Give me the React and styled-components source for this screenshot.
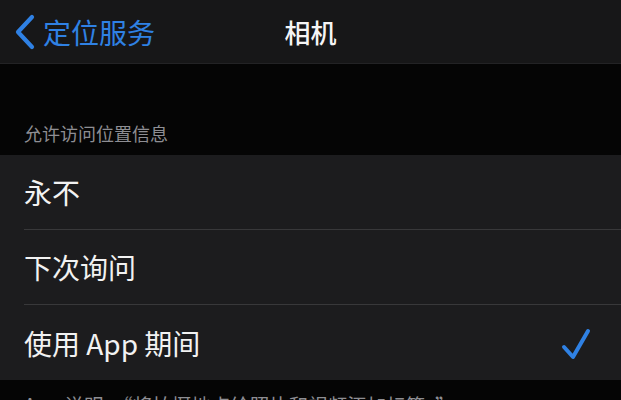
import React from 'react';
import styled, { createGlobalStyle } from 'styled-components';

const GlobalStyle = createGlobalStyle`
  html, body {
    margin: 0;
    padding: 0;
    background: #050505;
  }
  body {
    font-family: "Noto Sans CJK SC", "Noto Sans", sans-serif;
    -webkit-font-smoothing: antialiased;
  }
`;

const Screen = styled.div`
  width: 621px;
  height: 400px;
  overflow: hidden;
  background: #050505;
`;

const NavBar = styled.header`
  height: 64px;
  display: grid;
  grid-template-columns: 1fr auto 1fr;
  align-items: center;
  background: #171718;
  border-bottom: 1px solid #232325;
  box-sizing: border-box;
`;

const BackLink = styled.a`
  display: flex;
  align-items: center;
  gap: 7px;
  padding-left: 14px;
  color: #2f81e4;
  font-size: 28px;
  line-height: 1;
  text-decoration: none;
`;

const Title = styled.h1`
  margin: 0;
  color: #f5f5f5;
  font-size: 26px;
  font-weight: 500;
  line-height: 1;
`;

const SectionHeader = styled.div`
  height: 91px;
  display: flex;
  align-items: flex-end;
  padding: 0 0 13px 24px;
  box-sizing: border-box;
  color: #8e8e93;
  font-size: 18px;
  line-height: 1;
`;

const List = styled.ul`
  margin: 0;
  padding: 0;
  list-style: none;
  background: #1c1c1e;
`;

const Row = styled.li`
  height: 75px;
  display: flex;
  align-items: center;
  justify-content: space-between;
  margin-left: 24px;
  padding-right: 30px;
  box-sizing: border-box;
  border-bottom: ${p => (p.$last ? 'none' : '1px solid #38383a')};
  color: #f2f2f2;
  font-size: 28px;
  line-height: 1;
`;

const Footer = styled.p`
  margin: 0;
  padding: 13px 24px 0;
  color: #8e8e93;
  font-size: 19.5px;
  line-height: 1.2;
  white-space: nowrap;
`;

const Chevron = () => (
  <svg width="22" height="36" viewBox="0 0 22 36" fill="none">
    <path d="M18 3 L4 18 L18 33" stroke="#2f81e4" strokeWidth="4.2" strokeLinecap="round" strokeLinejoin="round" />
  </svg>
);

const Check = () => (
  <svg width="30" height="36" viewBox="0 0 30 36" fill="none">
    <path d="M3 22 L12 32 L27 6" stroke="#2f81e4" strokeWidth="4" strokeLinecap="round" strokeLinejoin="round" />
  </svg>
);

const options = [
  { label: '永不' },
  { label: '下次询问' },
  { label: '使用 App 期间', selected: true },
];

export default function App() {
  return (
    <Screen>
      <GlobalStyle />
      <NavBar>
        <BackLink href="#">
          <Chevron />
          定位服务
        </BackLink>
        <Title>相机</Title>
        <span />
      </NavBar>
      <SectionHeader>允许访问位置信息</SectionHeader>
      <List>
        {options.map((o, i) => (
          <Row key={o.label} $last={i === options.length - 1}>
            {o.label}
            {o.selected && <Check />}
          </Row>
        ))}
      </List>
      <Footer>App 说明：“将拍摄地点给照片和视频添加标签。”</Footer>
    </Screen>
  );
}
